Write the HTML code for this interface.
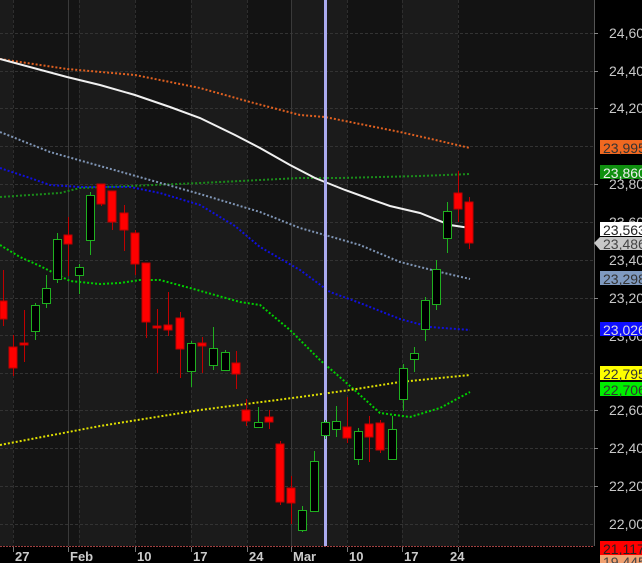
<!DOCTYPE html>
<html><head><meta charset="utf-8"><style>
html,body{margin:0;padding:0;background:#000;width:642px;height:563px;overflow:hidden}
svg{display:block;font-family:"Liberation Sans",sans-serif}
</style></head><body>
<svg width="642" height="563" viewBox="0 0 642 563" xmlns="http://www.w3.org/2000/svg">
<rect x="0" y="0" width="642" height="563" fill="#000"/>
<rect x="0" y="0" width="594" height="546" fill="#1b1b1b"/>
<rect x="13" y="0" width="66" height="546" fill="#141414"/>
<rect x="135" y="0" width="56" height="546" fill="#131313"/>
<rect x="247" y="0" width="44" height="546" fill="#131313"/>
<rect x="347" y="0" width="55" height="546" fill="#131313"/>
<rect x="458" y="0" width="136" height="546" fill="#131313"/>
<g stroke="#333" stroke-width="1" stroke-dasharray="3,2">
<line x1="0" y1="33.5" x2="594" y2="33.5"/><line x1="0" y1="71.5" x2="594" y2="71.5"/>
<line x1="0" y1="108.5" x2="594" y2="108.5"/><line x1="0" y1="146.5" x2="594" y2="146.5"/>
<line x1="0" y1="184.5" x2="594" y2="184.5"/><line x1="0" y1="222.5" x2="594" y2="222.5"/>
<line x1="0" y1="260.5" x2="594" y2="260.5"/><line x1="0" y1="298.5" x2="594" y2="298.5"/>
<line x1="0" y1="335.5" x2="594" y2="335.5"/><line x1="0" y1="373.5" x2="594" y2="373.5"/>
<line x1="0" y1="410.5" x2="594" y2="410.5"/><line x1="0" y1="448.5" x2="594" y2="448.5"/>
<line x1="0" y1="486.5" x2="594" y2="486.5"/><line x1="0" y1="524.5" x2="594" y2="524.5"/>
</g>
<g stroke="#2e2e2e" stroke-width="1" stroke-dasharray="3,2">
<line x1="13.5" y1="0" x2="13.5" y2="546"/><line x1="79.5" y1="0" x2="79.5" y2="546"/>
<line x1="135.5" y1="0" x2="135.5" y2="546"/><line x1="191.5" y1="0" x2="191.5" y2="546"/>
<line x1="247.5" y1="0" x2="247.5" y2="546"/><line x1="347.5" y1="0" x2="347.5" y2="546"/>
<line x1="402.5" y1="0" x2="402.5" y2="546"/><line x1="458.5" y1="0" x2="458.5" y2="546"/>
</g>
<line x1="68.5" y1="0" x2="68.5" y2="546" stroke="#3a3a3a"/>
<line x1="291.5" y1="0" x2="291.5" y2="546" stroke="#3a3a3a"/>
<g fill="none">
<polyline stroke="#e06020" stroke-width="2" stroke-dasharray="2,2" points="0,59 67,69 135,75 200,88 250,102 300,115 325,117 340,120 400,132 440,141 470,148"/>
<polyline stroke="#1a8c1a" stroke-width="2" stroke-dasharray="2,2" points="0,197 60,193 80,188 130,186 200,183 260,180 300,178 340,178 380,177 420,176 470,174"/>
<polyline stroke="#7f95b5" stroke-width="2" stroke-dasharray="2,2" points="0,132 50,152 100,166 150,180 200,194 260,212 300,228 325,235 360,245 400,262 440,272 470,279"/>
<polyline stroke="#1010e0" stroke-width="2" stroke-dasharray="2,2" points="0,168 30,178 50,185 80,187 130,187 160,193 200,205 235,226 260,247 300,270 330,292 360,303 400,319 430,327 470,330"/>
<polyline stroke="#00d000" stroke-width="2" stroke-dasharray="2,2" points="0,245 20,257 40,266 70,281 100,284 120,283 140,280 160,280 190,288 240,302 260,305 290,330 320,360 350,386 380,413 410,417 440,408 470,392"/>
<polyline stroke="#e0e000" stroke-width="2" stroke-dasharray="2,2" points="0,445 100,426 200,410 300,397 350,390 400,382 470,375"/>
<polyline stroke="#f0f0f0" stroke-width="2" points="0,59 67,77 100,85 135,95 170,107 200,118 235,135 260,148 290,165 315,178 325,182 345,190 370,199 390,206 420,213 450,225 470,228"/>
</g>
<rect x="324" y="0" width="3" height="546" fill="#aaaaee"/>
<g stroke-width="1">
<g fill="#ff0000" stroke="#c00000">
<line x1="3.5" y1="270" x2="3.5" y2="326"/><rect x="0" y="301" width="7" height="18"/>
<line x1="13.5" y1="335" x2="13.5" y2="376"/><rect x="9" y="347" width="8" height="21"/>
<line x1="24.5" y1="310" x2="24.5" y2="362"/><rect x="20" y="343" width="8" height="2"/>
<line x1="68.5" y1="217" x2="68.5" y2="276"/><rect x="64" y="235" width="8" height="9"/>
<line x1="101.5" y1="184" x2="101.5" y2="206"/><rect x="97" y="184" width="8" height="20"/>
<line x1="112.5" y1="191" x2="112.5" y2="230"/><rect x="108" y="191" width="8" height="31"/>
<line x1="124.5" y1="205" x2="124.5" y2="251"/><rect x="120" y="213" width="8" height="17"/>
<line x1="135.5" y1="230" x2="135.5" y2="275"/><rect x="131" y="233" width="8" height="31"/>
<line x1="146.5" y1="263" x2="146.5" y2="338"/><rect x="142" y="263" width="8" height="59"/>
<line x1="157.5" y1="309" x2="157.5" y2="373"/><rect x="153" y="326" width="8" height="2"/>
<line x1="168.5" y1="292" x2="168.5" y2="336"/><rect x="164" y="325" width="8" height="5"/>
<line x1="180.5" y1="312" x2="180.5" y2="378"/><rect x="176" y="318" width="8" height="31"/>
<line x1="202.5" y1="337" x2="202.5" y2="373"/><rect x="198" y="343" width="8" height="3"/>
<line x1="236.5" y1="351" x2="236.5" y2="389"/><rect x="232" y="363" width="8" height="11"/>
<line x1="246.5" y1="399" x2="246.5" y2="426"/><rect x="242" y="410" width="8" height="11"/>
<line x1="269.5" y1="410" x2="269.5" y2="429"/><rect x="265" y="417" width="8" height="5"/>
<line x1="280.5" y1="441" x2="280.5" y2="505"/><rect x="276" y="444" width="8" height="58"/>
<line x1="291.5" y1="476" x2="291.5" y2="524"/><rect x="287" y="488" width="8" height="15"/>
<line x1="347.5" y1="397" x2="347.5" y2="443"/><rect x="343" y="427" width="8" height="11"/>
<line x1="369.5" y1="416" x2="369.5" y2="462"/><rect x="365" y="424" width="8" height="13"/>
<line x1="380.5" y1="420" x2="380.5" y2="453"/><rect x="376" y="423" width="8" height="27"/>
<line x1="458.5" y1="171" x2="458.5" y2="222"/><rect x="454" y="193" width="8" height="16"/>
<line x1="469.5" y1="197" x2="469.5" y2="249"/><rect x="465" y="202" width="8" height="41"/>
</g>
<g fill="#000" stroke="#1fb01f">
<line x1="35.5" y1="303" x2="35.5" y2="340"/><rect x="31.5" y="305.5" width="8" height="26"/>
<line x1="46.5" y1="275" x2="46.5" y2="308"/><rect x="42.5" y="288.5" width="8" height="15"/>
<line x1="57.5" y1="233" x2="57.5" y2="283"/><rect x="53.5" y="239.5" width="8" height="40"/>
<line x1="79.5" y1="264" x2="79.5" y2="294"/><rect x="75.5" y="267.5" width="8" height="8"/>
<line x1="90.5" y1="192" x2="90.5" y2="255"/><rect x="86.5" y="195.5" width="8" height="45"/>
<line x1="191.5" y1="341" x2="191.5" y2="387"/><rect x="187.5" y="343.5" width="8" height="28"/>
<line x1="213.5" y1="327" x2="213.5" y2="370"/><rect x="209.5" y="348.5" width="8" height="17"/>
<line x1="225.5" y1="350" x2="225.5" y2="371"/><rect x="221.5" y="352.5" width="8" height="18"/>
<line x1="258.5" y1="407" x2="258.5" y2="428"/><rect x="254.5" y="422.5" width="8" height="5"/>
<line x1="302.5" y1="506" x2="302.5" y2="532"/><rect x="298.5" y="510.5" width="8" height="20"/>
<line x1="314.5" y1="451" x2="314.5" y2="512"/><rect x="310.5" y="461.5" width="8" height="50"/>
<line x1="325.5" y1="420" x2="325.5" y2="439"/><rect x="321.5" y="422.5" width="8" height="13"/>
<line x1="336.5" y1="406" x2="336.5" y2="437"/><rect x="332.5" y="421.5" width="8" height="8"/>
<line x1="358.5" y1="428" x2="358.5" y2="465"/><rect x="354.5" y="431.5" width="8" height="28"/>
<line x1="392.5" y1="416" x2="392.5" y2="459"/><rect x="388.5" y="429.5" width="8" height="30"/>
<line x1="403.5" y1="364" x2="403.5" y2="411"/><rect x="399.5" y="368.5" width="8" height="31"/>
<line x1="414.5" y1="347" x2="414.5" y2="372"/><rect x="410.5" y="353.5" width="8" height="6"/>
<line x1="425.5" y1="297" x2="425.5" y2="341"/><rect x="421.5" y="300.5" width="8" height="29"/>
<line x1="436.5" y1="260" x2="436.5" y2="310"/><rect x="432.5" y="269.5" width="8" height="35"/>
<line x1="447.5" y1="202" x2="447.5" y2="253"/><rect x="443.5" y="211.5" width="8" height="27"/>
</g>
</g>
<line x1="594.5" y1="0" x2="594.5" y2="546" stroke="#555"/>
<line x1="0" y1="546.5" x2="594" y2="546.5" stroke="#a04040" stroke-dasharray="2,1"/>
<g fill="#c8c8c8" font-size="14" text-anchor="start">
<text x="609" y="38">24,600</text><text x="609" y="76">24,400</text>
<text x="609" y="113">24,200</text><text x="609" y="189">23,800</text>
<text x="609" y="227">23,600</text><text x="609" y="265">23,400</text>
<text x="609" y="303">23,200</text><text x="609" y="341">23,000</text>
<text x="609" y="415">22,600</text><text x="609" y="453">22,400</text>
<text x="609" y="491">22,200</text><text x="609" y="529">22,000</text>
</g>
<g fill="#888"><rect x="594" y="33" width="4" height="1"/><rect x="594" y="71" width="4" height="1"/><rect x="594" y="108" width="4" height="1"/><rect x="594" y="184" width="4" height="1"/><rect x="594" y="298" width="4" height="1"/><rect x="594" y="410" width="4" height="1"/><rect x="594" y="448" width="4" height="1"/><rect x="594" y="486" width="4" height="1"/></g>
<g font-size="14">
<rect x="600" y="140" width="42" height="14" fill="#f06820"/><text x="603" y="153" fill="#333">23,995.</text>
<rect x="600" y="165" width="42" height="14" fill="#109010"/><text x="603" y="178" fill="#eee">23,860.</text>
<rect x="600" y="222" width="42" height="14" fill="#fff"/><text x="603" y="235" fill="#222">23,563.</text>
<polygon points="594,243 600,237 642,237 642,250 600,250" fill="#c8c8c8"/><text x="603" y="249" fill="#444">23,486.</text>
<rect x="600" y="271" width="42" height="14" fill="#7f9ac0"/><text x="603" y="284" fill="#333">23,298.</text>
<rect x="600" y="322" width="42" height="14" fill="#1010ff"/><text x="603" y="335" fill="#ddd">23,026.</text>
<rect x="600" y="366" width="42" height="14" fill="#ffff00"/><text x="603" y="379" fill="#333">22,795.</text>
<rect x="600" y="382" width="42" height="14" fill="#00ee00"/><text x="603" y="395" fill="#333">22,706.</text>
<rect x="600" y="541" width="42" height="14" fill="#ff0000"/><text x="603" y="554" fill="#222">21,117.</text>
<rect x="600" y="555" width="42" height="8" fill="#f0a070"/><text x="603" y="567" fill="#444">19,445.</text>
</g>
<g fill="#ccc" font-size="13" font-weight="bold">
<text x="15" y="561">27</text><text x="70" y="561">Feb</text><text x="137" y="561">10</text>
<text x="193" y="561">17</text><text x="249" y="561">24</text><text x="293" y="561">Mar</text>
<text x="349" y="561">10</text><text x="404" y="561">17</text><text x="450" y="561">24</text>
</g>
<g stroke="#777"><line x1="13.5" y1="547" x2="13.5" y2="552"/><line x1="68.5" y1="547" x2="68.5" y2="552"/><line x1="135.5" y1="547" x2="135.5" y2="552"/><line x1="191.5" y1="547" x2="191.5" y2="552"/><line x1="247.5" y1="547" x2="247.5" y2="552"/><line x1="291.5" y1="547" x2="291.5" y2="552"/><line x1="347.5" y1="547" x2="347.5" y2="552"/><line x1="402.5" y1="547" x2="402.5" y2="552"/><line x1="458.5" y1="547" x2="458.5" y2="552"/></g>
</svg>
</body></html>
